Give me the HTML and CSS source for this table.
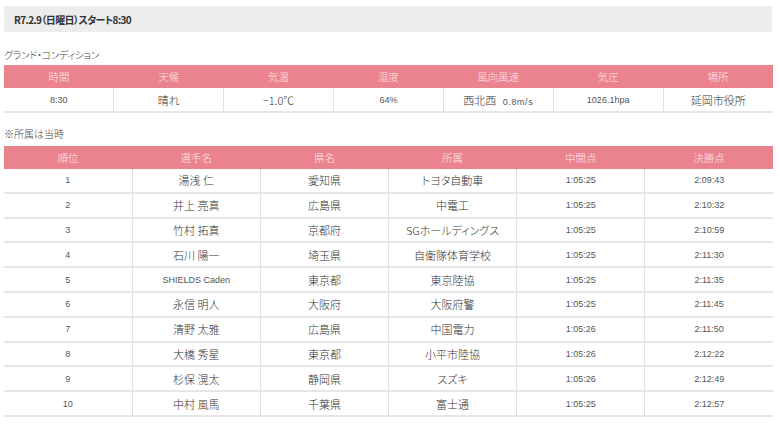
FILE: index.html
```html
<!DOCTYPE html>
<html lang="ja">
<head>
<meta charset="utf-8">
<link rel="stylesheet" href="styles.css">
</head>
<body>
<div class="page">
  <div class="titlebar">R7.2.9（日曜日）スタート8:30</div>
  <p class="caption cap-cond">グランド・コンディション</p>
  <table class="tbl cond">
    <thead>
      <tr><th>時間</th><th>天候</th><th>気温</th><th>湿度</th><th>風向風速</th><th>気圧</th><th>場所</th></tr>
    </thead>
    <tbody>
      <tr><td class="num">8:30</td><td>晴れ</td><td>−1.0℃</td><td class="num">64%</td><td>西北西 <span class="wind">0.8m/s</span></td><td class="num">1026.1hpa</td><td>延岡市役所</td></tr>
    </tbody>
  </table>
  <p class="caption cap-note">※所属は当時</p>
  <table class="tbl results">
    <thead>
      <tr><th>順位</th><th>選手名</th><th>県名</th><th>所属</th><th>中間点</th><th>決勝点</th></tr>
    </thead>
    <tbody>
      <tr><td class="num">1</td><td>湯浅 仁</td><td>愛知県</td><td>トヨタ自動車</td><td class="num">1:05:25</td><td class="num">2:09:43</td></tr>
      <tr><td class="num">2</td><td>井上 亮真</td><td>広島県</td><td>中電工</td><td class="num">1:05:25</td><td class="num">2:10:32</td></tr>
      <tr><td class="num">3</td><td>竹村 拓真</td><td>京都府</td><td>SGホールディングス</td><td class="num">1:05:25</td><td class="num">2:10:59</td></tr>
      <tr><td class="num">4</td><td>石川 陽一</td><td>埼玉県</td><td>自衛隊体育学校</td><td class="num">1:05:25</td><td class="num">2:11:30</td></tr>
      <tr><td class="num">5</td><td class="num">SHIELDS Caden</td><td>東京都</td><td>東京陸協</td><td class="num">1:05:25</td><td class="num">2:11:35</td></tr>
      <tr><td class="num">6</td><td>永信 明人</td><td>大阪府</td><td>大阪府警</td><td class="num">1:05:25</td><td class="num">2:11:45</td></tr>
      <tr><td class="num">7</td><td>清野 太雅</td><td>広島県</td><td>中国電力</td><td class="num">1:05:26</td><td class="num">2:11:50</td></tr>
      <tr><td class="num">8</td><td>大橋 秀星</td><td>東京都</td><td>小平市陸協</td><td class="num">1:05:26</td><td class="num">2:12:22</td></tr>
      <tr><td class="num">9</td><td>杉保 滉太</td><td>静岡県</td><td>スズキ</td><td class="num">1:05:26</td><td class="num">2:12:49</td></tr>
      <tr><td class="num">10</td><td>中村 風馬</td><td>千葉県</td><td>富士通</td><td class="num">1:05:25</td><td class="num">2:12:57</td></tr>
    </tbody>
  </table>
</div>
</body>
</html>
```
FILE: styles.css
```css
html, body {
  margin: 0;
  padding: 0;
  background: #ffffff;
}
body {
  font-family: "Noto Sans CJK JP", "Liberation Sans", sans-serif;
  font-feature-settings: "palt";
  color: #333333;
}
.page {
  width: 769px;
  padding: 6px 0 0 4px;
}
.titlebar {
  height: 26px;
  width: 768px;
  box-sizing: border-box;
  background: #ececec;
  padding-left: 10px;
  display: flex;
  align-items: center;
  font-size: 10px;
  font-weight: bold;
  letter-spacing: -0.6px;
  color: #333;
}
.caption {
  margin: 0;
  font-size: 10px;
  font-weight: 300;
  color: #444;
  line-height: 14px;
}
.cap-cond {
  margin-top: 16px;
  height: 17px;
  letter-spacing: -0.4px;
}
.cap-note {
  margin-top: 14px;
  height: 19px;
}
.tbl {
  width: 769px;
  border-collapse: collapse;
  table-layout: fixed;
}
.tbl th {
  background: #eb838f;
  color: #fde6e9;
  font-weight: 300;
  font-size: 10.5px;
  height: 23px;
  padding: 0;
  text-align: center;
}
.tbl td {
  height: 23px;
  padding: 0;
  text-align: center;
  font-size: 11px;
  font-weight: 300;
  color: #333;
  border-left: 1px solid #e0e0e0;
  border-bottom: 2px solid #e6e6e6;
}
.tbl td:first-child {
  border-left: none;
}
.tbl td.num {
  font-family: "Liberation Sans", sans-serif;
  font-size: 9px;
  font-weight: normal;
  color: #555;
}
.wind {
  font-family: "Liberation Sans", sans-serif;
  font-size: 9px;
  letter-spacing: 0.6px;
  margin-left: 4px;
  color: #555;
}
.results td {
  height: 22.8px;
}
```
